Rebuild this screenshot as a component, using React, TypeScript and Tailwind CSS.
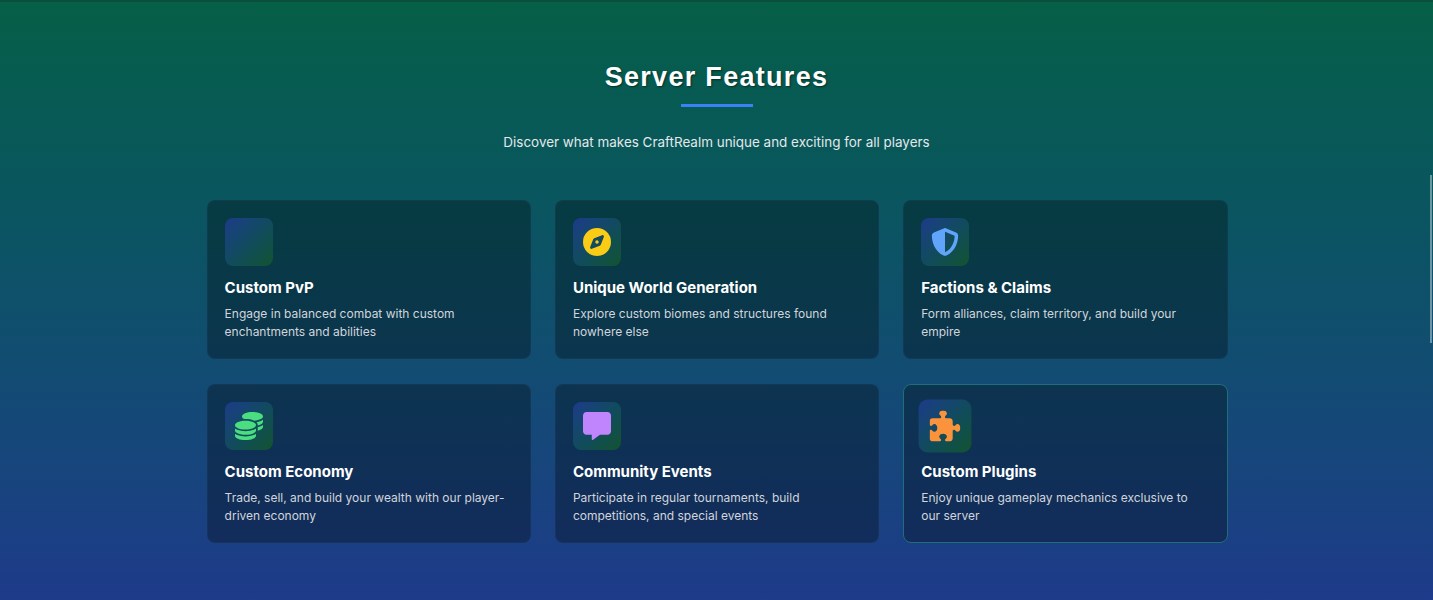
import { FaCompass, FaShieldHalved, FaCoins, FaMessage, FaPuzzlePiece } from "react-icons/fa6";
import type { ReactNode } from "react";

type Feature = { title: string; text: ReactNode; icon?: ReactNode; active?: boolean };

const features: Feature[] = [
  { title: "Custom PvP", text: "Engage in balanced combat with custom enchantments and abilities" },
  { title: "Unique World Generation", text: "Explore custom biomes and structures found nowhere else", icon: <FaCompass className="text-[28px] text-[#facc15]" /> },
  { title: "Factions & Claims", text: "Form alliances, claim territory, and build your empire", icon: <FaShieldHalved className="text-[28px] text-[#60a5fa]" /> },
  { title: "Custom Economy", text: "Trade, sell, and build your wealth with our player-driven economy", icon: <FaCoins className="text-[28px] text-[#4ade80]" /> },
  { title: "Community Events", text: "Participate in regular tournaments, build competitions, and special events", icon: <FaMessage className="text-[28px] text-[#c084fc]" /> },
  { title: "Custom Plugins", text: "Enjoy unique gameplay mechanics exclusive to our server", icon: <FaPuzzlePiece className="text-[28px] text-[#fb923c]" />, active: true },
];

function Card({ f }: { f: Feature }) {
  return (
    <div className={`h-[159px] rounded-lg border px-[17.1px] py-[17px] bg-black/30 ${f.active ? "border-[#1e6f78]" : "border-[#1f3f5f]/40"}`}>
      <div className={`flex h-12 w-12 items-center justify-center rounded-lg bg-linear-to-br from-[#1e3a8a] to-[#14532d] ${f.active ? "scale-110" : ""}`}>
        {f.icon}
      </div>
      <h3 className="mt-[12px] text-[15px] leading-[20px] font-bold text-white">{f.title}</h3>
      <p className="mt-[7px] text-[12px] leading-[18px] text-[#d1d5db]">{f.text}</p>
    </div>
  );
}

export default function App() {
  return (
    <div className="relative h-[600px] overflow-hidden bg-linear-to-b from-[#065f46] to-[#1e3a8a] font-['Inter',sans-serif]">
      <div className="h-[2px] bg-[#0b4f3c]" />
      <div className="mx-auto w-[1020px] pt-[58px]">
        <h2 className="text-center font-['Liberation_Sans',sans-serif] text-[27px] leading-[34px] font-bold tracking-[1.3px] text-white [text-shadow:1px_1px_2px_rgba(0,0,0,0.5)]">
          Server Features
        </h2>
        <div className="mx-auto mt-[10px] h-[3px] w-[72px] bg-[#3b82f6]" />
        <p className="mt-[24px] text-center text-[13.44px] leading-[22px] text-[#e5e7eb]">
          Discover what makes CraftRealm unique and exciting for all players
        </p>
        <div className="mt-[47px] grid w-[1021px] grid-cols-3 gap-x-[24px] gap-y-[25px]">
          {features.map((f) => (
            <Card key={f.title} f={f} />
          ))}
        </div>
      </div>
      <div className="absolute right-[1px] top-[175px] h-[168px] w-[2px] bg-white/40" />
    </div>
  );
}
